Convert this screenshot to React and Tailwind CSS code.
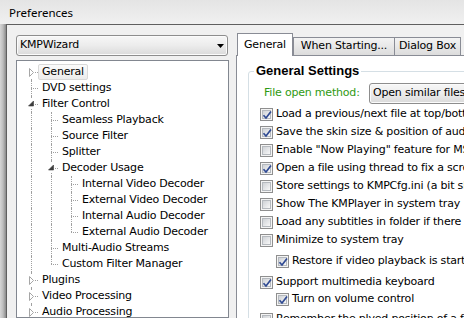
import React from 'react';

const font = "font-['DejaVu_Sans',sans-serif] text-[11px] tracking-[-0.2px]";

// flat tree, level + which rows close their sibling line
const tree = [
  { label: 'General', level: 0, exp: 'closed', first: true, selected: true },
  { label: 'DVD settings', level: 0 },
  { label: 'Filter Control', level: 0, exp: 'open' },
  { label: 'Seamless Playback', level: 1 },
  { label: 'Source Filter', level: 1 },
  { label: 'Splitter', level: 1 },
  { label: 'Decoder Usage', level: 1, exp: 'open' },
  { label: 'Internal Video Decoder', level: 2 },
  { label: 'External Video Decoder', level: 2 },
  { label: 'Internal Audio Decoder', level: 2 },
  { label: 'External Audio Decoder', level: 2, last: true },
  { label: 'Multi-Audio Streams', level: 1 },
  { label: 'Custom Filter Manager', level: 1, last: true },
  { label: 'Plugins', level: 0, exp: 'closed' },
  { label: 'Video Processing', level: 0, exp: 'closed' },
  { label: 'Audio Processing', level: 0, exp: 'closed' },
];

const options = [
  { label: 'Load a previous/next file at top/bottom of the playlist', checked: true },
  { label: 'Save the skin size & position of audio/video file', checked: true },
  { label: 'Enable "Now Playing" feature for MSN Messenger', checked: false },
  { label: 'Open a file using thread to fix a screen freezing', checked: true },
  { label: 'Store settings to KMPCfg.ini (a bit slower)', checked: false },
  { label: 'Show The KMPlayer in system tray', checked: false },
  { label: 'Load any subtitles in folder if there is no match', checked: false },
  { label: 'Minimize to system tray', checked: false },
];

function Expander({ type }) {
  if (type === 'closed') {
    return (
      <svg className="absolute left-[7px] top-[3px]" width="7" height="11" viewBox="0 0 7 11">
        <rect width="7" height="11" fill="#ffffff" />
        <path d="M1.5 1.5 L5.5 5.5 L1.5 9.5 Z" fill="#ffffff" stroke="#a6a6a6" />
      </svg>
    );
  }
  return (
    <svg className="absolute left-[6px] top-[3px]" width="8" height="9" viewBox="0 0 8 9">
      <rect width="8" height="9" fill="#ffffff" />
      <path d="M6.5 2 L6.5 7 L1.5 7 Z" fill="#3c3c3c" stroke="#3c3c3c" strokeWidth="0.6" />
    </svg>
  );
}

function TreeRow({ row }) {
  const guides = Array.from({ length: row.level });
  return (
    <div className="flex h-[16px] items-stretch">
      {guides.map((_, i) => (
        <div key={i} className="w-[20px] shrink-0">
          <div className="ml-[10px] h-full border-l border-dotted border-[#a0a0a0]" />
        </div>
      ))}
      <div className="relative w-[17px] shrink-0 flex flex-col">
        <div className={row.first ? 'h-[8px]' : 'ml-[10px] h-[8px] border-l border-dotted border-[#a0a0a0]'} />
        <div className={row.last ? 'ml-[10px] h-[8px] border-t border-dotted border-[#a0a0a0]' : 'ml-[10px] h-[8px] border-t border-l border-dotted border-[#a0a0a0]'} />
        {row.exp && <Expander type={row.exp} />}
      </div>
      <div
        className={
          row.selected
            ? 'flex items-center px-[3px] border border-[#d9d9d9] rounded-[2px] bg-gradient-to-b from-[#fbfbfb] to-[#ececec] whitespace-nowrap'
            : 'flex items-center px-[3px] border border-transparent whitespace-nowrap'
        }
      >
        {row.label}
      </div>
    </div>
  );
}

function Combo({ text, className }) {
  return (
    <div
      className={`h-[21px] flex items-center justify-between pl-[3px] pr-[3px] border border-[#8d8d8d] rounded-[3px] bg-gradient-to-b from-[#f7f7f7] via-[#ececec] to-[#dadada] shadow-[inset_0_0_0_1px_#fbfbfb] whitespace-nowrap ${className}`}
    >
      <span>{text}</span>
      <svg width="7" height="4" viewBox="0 0 7 4">
        <path d="M0 0 H7 L3.5 4 Z" fill="#000" />
      </svg>
    </div>
  );
}

function Checkbox({ checked }) {
  return (
    <span className="relative block w-[13px] h-[13px] shrink-0 border border-[#8f8f8f] bg-[#f4f4f4] p-[1px]">
      <span className="block w-full h-full border border-[#b5b9be] bg-gradient-to-br from-[#cfd2d6] to-[#f8f8f8]" />
      {checked && (
        <svg className="absolute left-0 top-0" width="13" height="13" viewBox="0 0 13 13">
          <path d="M2.5 6.2 L5 9 L10 2.5" fill="none" stroke="#2f4a93" strokeWidth="1.7" />
        </svg>
      )}
    </span>
  );
}

function Option({ label, checked, className }) {
  return (
    <div className={`flex items-center gap-[3px] whitespace-nowrap ${className}`}>
      <Checkbox checked={checked} />
      <span>{label}</span>
    </div>
  );
}

export default function App() {
  return (
    <div className={`w-[464px] h-[318px] overflow-hidden flex flex-col bg-[#ececec] text-black ${font}`}>
      {/* title bar */}
      <div className="h-[24px] shrink-0 flex items-center pl-[9px] pt-[2px] bg-gradient-to-b from-[#e4e4e4] to-[#f0f0f0] font-['Noto_Sans',sans-serif] text-[11.5px] tracking-normal">
        Preferences
      </div>
      <div className="flex flex-1 min-h-0">
        <div className="w-[6px] shrink-0 bg-gradient-to-r from-[#d6d6d6] via-[#bdbdbd] to-[#8a8a8a]" />
        <div className="flex-1 min-w-0 flex gap-[7px] pl-[9px] pt-[8px] border-l border-t border-[#5f5f5f] bg-[#f0f0f0]">
          {/* left column */}
          <div className="w-[213px] shrink-0 flex flex-col gap-[4px] pt-[2px]">
            <Combo text="KMPWizard" className="w-[212px]" />
            <div className="flex-1 border border-[#828790] bg-white pt-[3px] pl-[4px] overflow-hidden">
              {tree.map((row) => (
                <TreeRow key={row.label} row={row} />
              ))}
            </div>
          </div>

          {/* right column */}
          <div className="w-[320px] shrink-0 flex flex-col">
            <div className="h-[22px] flex items-end pl-[1px]">
              <div className="relative z-10 w-[56px] h-[23px] -mb-px flex items-center justify-center border border-b-0 border-[#898c95] bg-white">
                General
              </div>
              <div className="w-[102px] h-[18px] flex items-center justify-center border border-b-0 border-[#898c95] bg-gradient-to-b from-[#f3f3f3] to-[#dcdcdc]">
                When Starting...
              </div>
              <div className="w-[66px] h-[18px] flex items-center justify-center border border-b-0 border-l-0 border-[#898c95] bg-gradient-to-b from-[#f3f3f3] to-[#dcdcdc]">
                Dialog Box
              </div>
            </div>
            <div className="flex-1 border-l border-t border-[#898c95] bg-white pl-[11px] pt-[8px]">
              <fieldset className="w-[300px] h-[300px] border border-[#d5dfe5] rounded-[3px]">
                <legend className="ml-[5px] px-[2px] leading-[14px] font-['Liberation_Sans',sans-serif] font-bold text-[13px] tracking-normal">
                  General Settings
                </legend>
                <div className="mt-[5px] flex items-center pl-[15px]">
                  <span className="w-[105px] shrink-0 text-[#2f9a12]">File open method:</span>
                  <Combo text="Open similar files automatically" className="w-[200px]" />
                </div>
                <div className="mt-[1px] flex flex-col pl-[11px]">
                  {options.map((o) => (
                    <Option key={o.label} label={o.label} checked={o.checked} className="h-[18px]" />
                  ))}
                  <Option label="Restore if video playback is started" checked className="h-[18px] mt-[3px] pl-[16px]" />
                  <Option label="Support multimedia keyboard" checked className="h-[17px] mt-[4px]" />
                  <Option label="Turn on volume control" checked className="h-[17px] pl-[16px]" />
                  <Option label="Remember the plyed position of a file" checked={false} className="h-[18px] mt-[2px]" />
                </div>
              </fieldset>
            </div>
          </div>
        </div>
      </div>
    </div>
  );
}
